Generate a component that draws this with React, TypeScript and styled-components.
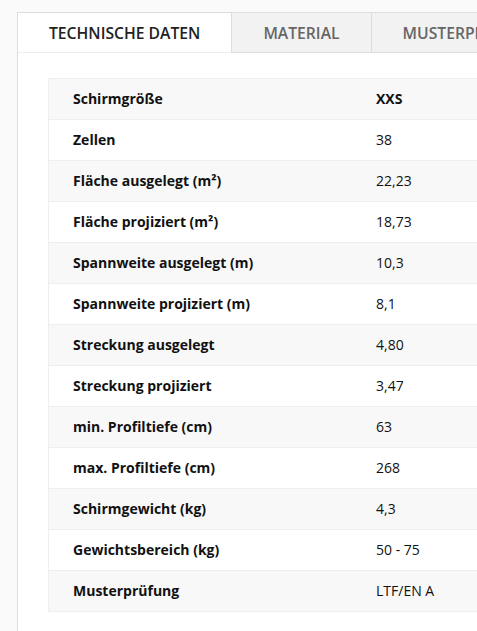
import React from "react";
import styled, { createGlobalStyle } from "styled-components";

const Global = createGlobalStyle`
  html, body {
    margin: 0;
    padding: 0;
    overflow: hidden;
    background: #fafafa;
    font-family: "Open Sans", "Liberation Sans", sans-serif;
  }
`;

const Page = styled.div`
  padding: 12px 0 0 17px;
  min-height: 631px;
  box-sizing: border-box;
  display: flex;
`;

const Panel = styled.section`
  flex: 1;
  min-height: 619px;
  background: #fff;
  border-left: 1px solid #ddd;
  border-top: 1px solid #ddd;
  min-width: 0;
  overflow: hidden;
`;

const Tabs = styled.div`
  display: flex;
  height: 40px;
  white-space: nowrap;
`;

const Tab = styled.div<{ $active?: boolean }>`
  flex: none;
  display: flex;
  align-items: center;
  padding: 1px 31px 0;
  font-size: 15.7px;
  font-weight: 600;
  text-transform: uppercase;
  color: ${(p) => (p.$active ? "#222" : "#666")};
  background: ${(p) => (p.$active ? "#fff" : "#f2f2f2")};
  border-left: ${(p) => (p.$active ? "none" : "1px solid #ddd")};
  border-bottom: 1px solid ${(p) => (p.$active ? "#eee" : "#ddd")};
`;

const Content = styled.div`
  padding: 25px 0 0 30px;
`;

const Table = styled.table`
  border-collapse: collapse;
  table-layout: fixed;
  width: 500px;
  border: 1px solid #eee;
  font-size: 14px;
  color: #111;
`;

const Row = styled.tr<{ $odd: boolean }>`
  height: 41px;
  background: ${(p) => (p.$odd ? "#f8f8f8" : "#fff")};
  border-bottom: 1px solid #eee;
`;

const Label = styled.th`
  width: 255px;
  padding: 0 24px 1px;
  text-align: left;
  font-weight: 700;
`;

const Value = styled.td<{ $bold?: boolean }>`
  width: 147px;
  padding: 0 24px 1px;
  font-weight: ${(p) => (p.$bold ? 700 : 400)};
`;

const rows: [string, string][] = [
  ["Schirmgröße", "XXS"],
  ["Zellen", "38"],
  ["Fläche ausgelegt (m²)", "22,23"],
  ["Fläche projiziert (m²)", "18,73"],
  ["Spannweite ausgelegt (m)", "10,3"],
  ["Spannweite projiziert (m)", "8,1"],
  ["Streckung ausgelegt", "4,80"],
  ["Streckung projiziert", "3,47"],
  ["min. Profiltiefe (cm)", "63"],
  ["max. Profiltiefe (cm)", "268"],
  ["Schirmgewicht (kg)", "4,3"],
  ["Gewichtsbereich (kg)", "50 - 75"],
  ["Musterprüfung", "LTF/EN A"],
];

export default function App() {
  return (
    <>
      <Global />
      <Page>
        <Panel>
          <Tabs>
            <Tab $active>Technische Daten</Tab>
            <Tab>Material</Tab>
            <Tab>Musterprüfung</Tab>
          </Tabs>
          <Content>
            <Table>
              <tbody>
                {rows.map(([k, v], i) => (
                  <Row key={k} $odd={i % 2 === 0}>
                    <Label scope="row">{k}</Label>
                    <Value $bold={i === 0}>{v}</Value>
                  </Row>
                ))}
              </tbody>
            </Table>
          </Content>
        </Panel>
      </Page>
    </>
  );
}
